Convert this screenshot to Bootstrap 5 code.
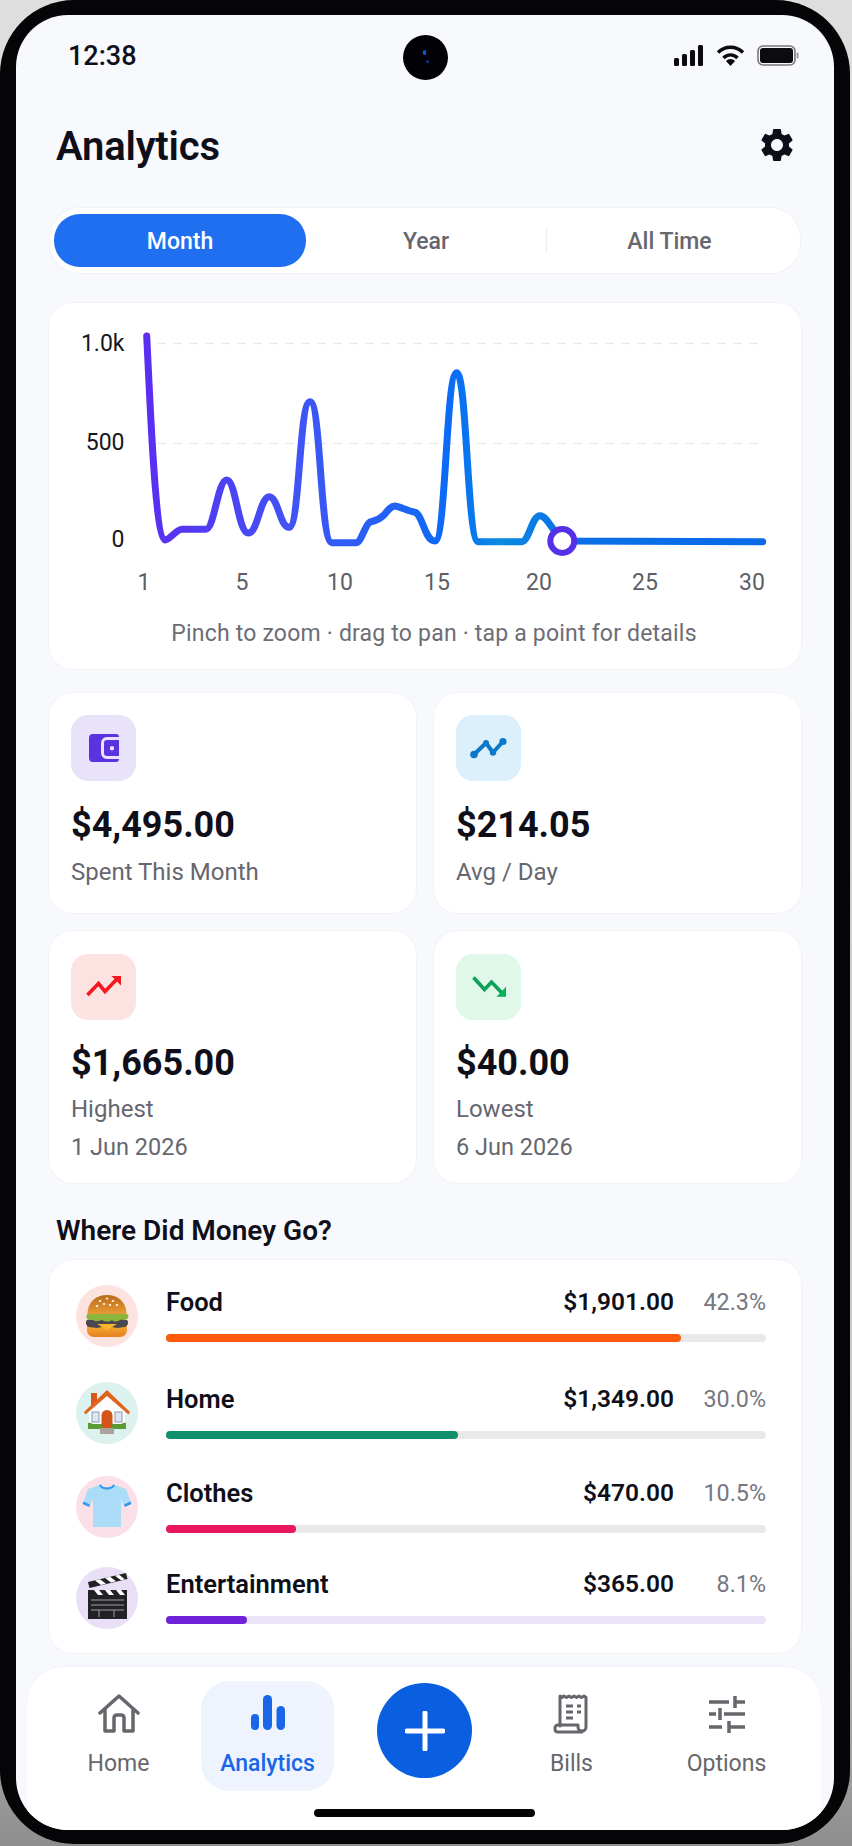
<!DOCTYPE html>
<html lang="en">
<head>
    <meta charset="UTF-8">
    <meta name="viewport" content="width=device-width, initial-scale=1.0">
    <title>Analytics</title>
    <link rel="stylesheet" href="https://cdn.jsdelivr.net/npm/bootstrap@5.3.0/dist/css/bootstrap.min.css">
    <style>
        html, body { margin: 0; height: 1846px; background: linear-gradient(#dedede, #c8c8c8 85%, #8e8e8e); overflow: hidden; }
        body { font-family: Roboto, "Liberation Sans", sans-serif; color: #0f0f1a; }
        .phone { width: 850px; height: 1844px; background: #050507; border-radius: 74px; padding: 15px 16px 14px 16px; }
        .screen { position: relative; height: 100%; background: #f8f9fd; border-radius: 52px; overflow: hidden; }

        .status-row { height: 80px; padding: 0 35px 0 52px; }
        .clock { font-size: 27px; font-weight: 500; margin-top: 2px; }
        .camera { position: absolute; left: 387px; top: 20px; width: 45px; height: 45px; border-radius: 50%; background: #020206; }
        .camera i { position: absolute; left: 20px; top: 15px; width: 3px; height: 5px; border-radius: 2px; background: #0a5fd0; }
        .camera b { position: absolute; left: 23px; top: 25px; width: 3px; height: 3px; border-radius: 2px; background: #0a2f90; }

        .head-row { height: 100px; padding: 0 37px 0 40px; }
        .head-row h1 { font-size: 40px; font-weight: 600; margin: 4px 0 0; letter-spacing: -.2px; }

        .content { padding: 0 33px; }
        .panel { background: #fff; border-radius: 24px; box-shadow: 0 0 0 1px #f2f3f8; }

        .segment { height: 65px; margin: 13px 1px 0; padding: 6px 4px; border-radius: 30px; background: #fff; box-shadow: 0 0 0 1px #f1f2f6; }
        .seg-item { flex: 1 1 0; font-size: 23px; font-weight: 500; color: #66666e; height: 100%; position: relative; padding-top: 3px; }
        .seg-active { flex: 0 0 252px; background: #1f6ff0; color: #fff; border-radius: 26px; }
        .seg-last { padding-right: 3px; }
        .seg-last::before { content: ""; position: absolute; left: 0; top: 14px; bottom: 14px; width: 1px; background: #eeeef2; }
        .seg-mid { flex: 0 0 240px; }

        .chart-panel { height: 366px; margin-top: 30px; }
        .chart-panel svg { display: block; }
        .chart-panel text { font-family: Roboto, sans-serif; font-size: 23px; }
        .chart-note { font-size: 23px; color: #6d6d75; padding-left: 18px; margin-top: 11px; line-height: 30px; letter-spacing: .2px; }

        .stat-grid { display: grid; grid-template-columns: 367px 367px; gap: 18px; margin-top: 24px; }
        .stat-box { padding: 22px; }
        .stat-short { height: 220px; }
        .stat-tall { height: 252px; padding-top: 23px; }
        .stat-tile { width: 65px; height: 66px; border-radius: 17px; }
        .stat-value { font-size: 36px; font-weight: 700; line-height: 42px; margin-top: 22px; }
        .stat-label { font-size: 24px; color: #66666e; line-height: 30px; margin-top: 10px; }
        .stat-date { font-size: 23.5px; margin-top: 8px; }
        .stat-short .stat-value { margin-top: 23px; }
        .stat-short .stat-label { margin-top: 11px; }
        .tile-violet { background: #e8e3fb; }
        .tile-sky { background: #dcf0fb; }
        .tile-rose { background: #fde2e2; }
        .tile-mint { background: #e0f8e9; }

        .section-title { font-size: 28px; font-weight: 600; line-height: 30px; margin: 33px 0 14px 7px; }

        .cat-panel { height: 393px; padding: 25px 35px 25px 27px; }
        .cat-row { height: 62px; }
        .cat-row:nth-child(2) { margin-top: 35px; }
        .cat-row:nth-child(3) { margin-top: 32px; }
        .cat-row:nth-child(4) { margin-top: 29px; }
        .cat-icon { flex: 0 0 62px; width: 62px; height: 62px; margin-right: 28px; border-radius: 50%; }
        .cat-name { font-size: 25.5px; font-weight: 600; line-height: 34px; }
        .cat-amount { font-size: 24.5px; font-weight: 600; line-height: 34px; }
        .cat-pct { width: 92px; text-align: right; font-size: 23.3px; color: #77777f; line-height: 34px; }
        .cat-track { height: 8px; margin-top: 15px; border-radius: 4px; background: #e9e9ec; }
        .cat-fill { height: 100%; border-radius: 4px; }
        .track-violet { background: #ebe3f8; }

        .tabbar { position: absolute; left: 11px; right: 13px; bottom: 0; height: 163px; background: #fff; border-radius: 36px 36px 0 0; box-shadow: 0 -1px 3px rgba(30, 40, 80, .03); padding: 14px 0 0 25px; }
        .tab-item { width: 133px; height: 110px; font-size: 23px; color: #66666c; border-radius: 28px; padding-top: 13px; }
        .tab-item svg { display: block; height: 40px; margin-bottom: 16px; }
        .tab-item span { line-height: 28px; }
        .tab-on { background: #eef3fd; color: #1a66e8; font-weight: 500; margin-left: 16px; }
        .tab-add { width: 95px; height: 95px; border-radius: 50%; background: #0a5fe0; margin: 2px 33px 0 43px; }
        .tab-last { margin-left: 22px; }
        .home-bar { position: absolute; left: 298px; bottom: 13px; width: 221px; height: 8px; border-radius: 4px; background: #050507; }
    </style>
</head>
<body>

<div class="phone">
<div class="screen">

    <div class="status-row d-flex align-items-center justify-content-between">
        <span class="clock">12:38</span>
        <div class="d-flex align-items-center gap-2">
            <svg width="30" height="21" viewBox="0 0 30 21"><g fill="#0b0b10"><rect x="0" y="13" width="5" height="8" rx="1.5"/><rect x="8" y="9" width="5" height="12" rx="1.5"/><rect x="16" y="5" width="5" height="16" rx="1.5"/><rect x="24" y="0" width="5" height="21" rx="1.5"/></g></svg>
            <svg class="ms-1" width="29" height="21" viewBox="0 0 29 21"><g fill="none" stroke="#0b0b10" stroke-width="3.4"><path d="M2 7.5a17.5 17.5 0 0 1 25 0"/><path d="M7.5 13a9.5 9.5 0 0 1 14 0"/></g><path d="M14.5 21l-4.6-5a6.4 6.4 0 0 1 9.2 0z" fill="#0b0b10"/></svg>
            <svg class="ms-1" width="42" height="21" viewBox="0 0 42 21"><rect x="1" y="1" width="37" height="19" rx="5" fill="none" stroke="#77777c" stroke-width="1.6"/><rect x="3" y="3" width="33" height="15" rx="3" fill="#0b0b10"/><rect x="39.6" y="7.5" width="2" height="6" rx="1" fill="#9a9a9f"/></svg>
        </div>
    </div>
    <div class="camera"><i></i><b></b></div>

    <div class="head-row d-flex align-items-center justify-content-between">
        <h1>Analytics</h1>
        <svg width="40" height="40" viewBox="0 0 24 24"><path fill="#0e0e18" d="M19.14 12.94c.04-.3.06-.61.06-.94 0-.32-.02-.64-.07-.94l2.03-1.58a.49.49 0 0 0 .12-.61l-1.92-3.32a.488.488 0 0 0-.59-.22l-2.39.96c-.5-.38-1.03-.7-1.62-.94l-.36-2.54a.484.484 0 0 0-.48-.41h-3.84c-.24 0-.43.17-.47.41l-.36 2.54c-.59.24-1.13.57-1.62.94l-2.39-.96c-.22-.08-.47 0-.59.22L2.74 8.87c-.12.21-.08.47.12.61l2.03 1.58c-.05.3-.09.63-.09.94s.02.64.07.94l-2.03 1.58a.49.49 0 0 0-.12.61l1.92 3.32c.12.22.37.29.59.22l2.39-.96c.5.38 1.03.7 1.62.94l.36 2.54c.05.24.24.41.48.41h3.84c.24 0 .44-.17.47-.41l.36-2.54c.59-.24 1.13-.56 1.62-.94l2.39.96c.22.08.47 0 .59-.22l1.92-3.32c.12-.22.07-.47-.12-.61l-2.01-1.58zM12 15.6c-1.98 0-3.6-1.62-3.6-3.6s1.62-3.6 3.6-3.6 3.6 1.62 3.6 3.6-1.62 3.6-3.6 3.6z"/></svg>
    </div>

    <div class="content">
        <div class="segment d-flex align-items-center">
            <div class="seg-item seg-active d-flex align-items-center justify-content-center">Month</div>
            <div class="seg-item seg-mid d-flex align-items-center justify-content-center">Year</div>
            <div class="seg-item seg-last d-flex align-items-center justify-content-center">All Time</div>
        </div>

        <div class="panel chart-panel">
            <!-- viewBox is in page coordinates so the points are easy to read off -->
            <svg width="751" height="305" viewBox="49 303 751 305">
                <defs>
                    <linearGradient id="lineGrad" gradientUnits="userSpaceOnUse" x1="146" y1="0" x2="763" y2="0">
                        <stop offset="0" stop-color="#5b2ef2"/>
                        <stop offset=".25" stop-color="#3f55f5"/>
                        <stop offset=".5" stop-color="#0a6cf5"/>
                        <stop offset=".57" stop-color="#0a8be0"/>
                        <stop offset=".68" stop-color="#0a70e8"/>
                        <stop offset="1" stop-color="#0a6ae8"/>
                    </linearGradient>
                </defs>
                <path d="M157 343.5H764M157 443.5H764" stroke="#e9e9ec" stroke-width="1.5" stroke-dasharray="9 7" fill="none"/>
                <path fill="none" stroke="url(#lineGrad)" stroke-width="7" stroke-linecap="round" stroke-linejoin="round"
                    d="M146.7 336C150 400 155 538 165 540C170 540 176 529.3 182 529.3L206 529.3C214 529.3 218 480 226.7 480C236 480 238 533 248.3 533C258 533 260 496.7 269.3 496.7C278 496.7 280 527.3 289 527.3C300 527.3 299 401.7 310 401.7C321 401.7 320 542.7 332 542.7L356 542.7C362 542.7 365 521.7 372 521.5C378 520 380 519 384 515C388 510 391 506 395 506C401 507 408 511 414 512C423 513 424 541 435 541C446 541 446 372.7 456.7 372.7C467 372.7 467 541.7 478.3 541.7L521.7 541.7C529 541.7 532 515.7 540 515.7C547 515.7 552 530 562 541L762.7 541.7"/>
                <circle cx="562.3" cy="541" r="12" fill="#fff" stroke="#5530e8" stroke-width="6"/>
                <g fill="#17171c" text-anchor="end" dominant-baseline="central">
                    <text x="124.5" y="343">1.0k</text>
                    <text x="124.5" y="442">500</text>
                    <text x="124.5" y="539">0</text>
                </g>
                <g fill="#5e5e66" text-anchor="middle" dominant-baseline="central">
                    <text x="144" y="582">1</text>
                    <text x="242" y="582">5</text>
                    <text x="340" y="582">10</text>
                    <text x="437" y="582">15</text>
                    <text x="539" y="582">20</text>
                    <text x="645" y="582">25</text>
                    <text x="752" y="582">30</text>
                </g>
            </svg>
            <div class="chart-note text-center">Pinch to zoom · drag to pan · tap a point for details</div>
        </div>

        <div class="stat-grid">
            <div class="panel stat-box stat-short">
                <div class="stat-tile tile-violet"><svg width="65" height="66" viewBox="0 0 65 66"><path d="M22 19h23a3 3 0 0 1 3 3H36a6 6 0 0 0-6 6v10a6 6 0 0 0 6 6h12a3 3 0 0 1-3 3H22a4 4 0 0 1-4-4V23a4 4 0 0 1 4-4z" fill="#5a32e0"/><path fill-rule="evenodd" d="M36 25h12v16H36a3 3 0 0 1-3-3V28a3 3 0 0 1 3-3zm5 6a2.2 2.2 0 1 0 0 4.4 2.2 2.2 0 0 0 0-4.4z" fill="#5a32e0"/></svg></div>
                <div class="stat-value">$4,495.00</div>
                <div class="stat-label">Spent This Month</div>
            </div>
            <div class="panel stat-box stat-short">
                <div class="stat-tile tile-sky"><svg width="65" height="66" viewBox="0 0 65 66"><path d="M18 39.5L30 28l7 9.5L47 26.5" fill="none" stroke="#0b78c9" stroke-width="4" stroke-linecap="round" stroke-linejoin="round"/><g fill="#0b78c9"><circle cx="18" cy="39.5" r="3.8"/><circle cx="30" cy="28" r="3"/><circle cx="37" cy="37.5" r="3.2"/><circle cx="47" cy="26.5" r="3.6"/></g></svg></div>
                <div class="stat-value">$214.05</div>
                <div class="stat-label">Avg / Day</div>
            </div>
            <div class="panel stat-box stat-tall">
                <div class="stat-tile tile-rose"><svg width="65" height="66" viewBox="0 0 65 66"><path d="M16.5 41L27.5 29.5 34 37.5 46 25" fill="none" stroke="#f5191f" stroke-width="3.6"/><path d="M40.5 22h9.5v9.5z" fill="#f5191f"/></svg></div>
                <div class="stat-value">$1,665.00</div>
                <div class="stat-label">Highest</div>
                <div class="stat-label stat-date">1 Jun 2026</div>
            </div>
            <div class="panel stat-box stat-tall">
                <div class="stat-tile tile-mint"><svg width="65" height="66" viewBox="0 0 65 66"><path d="M17.5 23.5L28.5 35.5 35.5 28 46 39" fill="none" stroke="#0e9f58" stroke-width="3.6"/><path d="M50 32.7v10h-9.5z" fill="#02b35c"/></svg></div>
                <div class="stat-value">$40.00</div>
                <div class="stat-label">Lowest</div>
                <div class="stat-label stat-date">6 Jun 2026</div>
            </div>
        </div>

        <div class="section-title">Where Did Money Go?</div>

        <div class="panel cat-panel">
            <div class="cat-row d-flex">
                <div class="cat-icon">
                    <svg width="62" height="62" viewBox="0 0 62 62">
                        <defs>
                            <linearGradient id="bunTop" x1="0" y1="0" x2="0" y2="1"><stop offset="0" stop-color="#b96a1c"/><stop offset="1" stop-color="#e89a35"/></linearGradient>
                            <linearGradient id="bunLow" x1="0" y1="0" x2="0" y2="1"><stop offset="0" stop-color="#f7ad35"/><stop offset="1" stop-color="#e57f1e"/></linearGradient>
                        </defs>
                        <circle cx="31" cy="31" r="31" fill="#fde3e0"/>
                        <path d="M11 40h40v5c0 4-3 7-7 7H18c-4 0-7-3-7-7z" fill="url(#bunLow)"/>
                        <path d="M11 35c6-2 34-2 40 0 2 2 1 6-2 7l-8 1-10-2-10 2-8-1c-3-1-4-5-2-7z" fill="#4b4650"/>
                        <path d="M21 39h20l-10 6z" fill="#f6b72b"/>
                        <path d="M11 29h40c2 1 2 4 0 5-3 2-5 0-7 1-3 2-6 2-8 0-3 2-7 2-10 0-3 1-6 2-9 0-4 0-8 0-6-6z" fill="#8cb53a"/>
                        <path d="M11.5 29C11.5 17 20 10 31 10s19.5 7 19.5 19z" fill="url(#bunTop)"/>
                        <g fill="#fff3dc"><ellipse cx="24" cy="16" rx="1.3" ry=".9"/><ellipse cx="31" cy="13.5" rx="1.3" ry=".9"/><ellipse cx="37" cy="16" rx="1.3" ry=".9"/><ellipse cx="28" cy="19" rx="1.3" ry=".9"/><ellipse cx="34" cy="20" rx="1.3" ry=".9"/><ellipse cx="41" cy="20" rx="1.3" ry=".9"/><ellipse cx="21" cy="21" rx="1.3" ry=".9"/></g>
                    </svg>
                </div>
                <div class="flex-grow-1">
                    <div class="d-flex">
                        <span class="cat-name me-auto">Food</span>
                        <span class="cat-amount">$1,901.00</span>
                        <span class="cat-pct">42.3%</span>
                    </div>
                    <div class="cat-track"><div class="cat-fill" style="width: 85.8%; background: #ff5a0a"></div></div>
                </div>
            </div>
            <div class="cat-row d-flex">
                <div class="cat-icon">
                    <svg width="62" height="62" viewBox="0 0 62 62">
                        <circle cx="31" cy="31" r="31" fill="#dcf2ee"/>
                        <rect x="15" y="11" width="6" height="14" fill="#d9591b"/>
                        <path d="M13 28L31 12l18 16v18H13z" fill="#fdfdfd"/>
                        <path d="M8 30L31 8l23 22-1.5 2.500L31 14 9.500 32.500z" fill="#e2651c"/>
                        <path d="M12 41c3-1 4 1 5 1h28c1 0 2-2 5-1v6H12z" fill="#5c9a33"/>
                        <rect x="25.5" y="28" width="11" height="19" rx="5.5" fill="#d2541a"/>
                        <rect x="16" y="30" width="7" height="10" fill="#dfe6f2" stroke="#8d9ab3"/>
                        <rect x="39" y="30" width="7" height="10" fill="#dfe6f2" stroke="#8d9ab3"/>
                        <rect x="24" y="46" width="14" height="6" fill="#a8a39c"/>
                    </svg>
                </div>
                <div class="flex-grow-1">
                    <div class="d-flex">
                        <span class="cat-name me-auto">Home</span>
                        <span class="cat-amount">$1,349.00</span>
                        <span class="cat-pct">30.0%</span>
                    </div>
                    <div class="cat-track"><div class="cat-fill" style="width: 48.7%; background: #0f8f6c"></div></div>
                </div>
            </div>
            <div class="cat-row d-flex">
                <div class="cat-icon">
                    <svg width="62" height="62" viewBox="0 0 62 62">
                        <circle cx="31" cy="31" r="31" fill="#fbe0ea"/>
                        <path d="M23 9l-11 4-5 14 7 3 3-7v28h28V23l3 7 7-3-5-14-11-4c-2 3-14 3-16 0z" fill="#aadcf8"/>
                        <path d="M23 9c2 6 14 6 16 0l-2-.5c-1 4-11 4-12 0z" fill="#2f9bea"/>
                        <path d="M7.5 25.5l6.5 3-1 2.5-6.5-3zM54.500 25.500l-6.500 3 1 2.500 6.500-3z" fill="#2f9bea"/>
                    </svg>
                </div>
                <div class="flex-grow-1">
                    <div class="d-flex">
                        <span class="cat-name me-auto">Clothes</span>
                        <span class="cat-amount">$470.00</span>
                        <span class="cat-pct">10.5%</span>
                    </div>
                    <div class="cat-track"><div class="cat-fill" style="width: 21.7%; background: #e8185f"></div></div>
                </div>
            </div>
            <div class="cat-row d-flex">
                <div class="cat-icon">
                    <svg width="62" height="62" viewBox="0 0 62 62">
                        <circle cx="31" cy="31" r="31" fill="#e9dff7"/>
                        <rect x="12" y="23" width="39" height="29" fill="#222226"/>
                        <path d="M12 15l38-9 1.5 6-38 9z" fill="#222226"/>
                        <path d="M19 13.5l6 4.5 5-1.200-6-4.500zM29 11l6 4.500 5-1.200-6-4.500zM39 8.800l6 4.500 4-1-6-4.500z" fill="#fff"/>
                        <path d="M18 23l4 5h5l-4-5zM29 23l4 5h5l-4-5zM40 23l4 5h5l-4-5z" fill="#fff"/>
                        <path d="M15 33h33M15 38h33M15 43h33M23 43v7M38 43v7" stroke="#9c9ca2" stroke-width="1"/>
                    </svg>
                </div>
                <div class="flex-grow-1">
                    <div class="d-flex">
                        <span class="cat-name me-auto">Entertainment</span>
                        <span class="cat-amount">$365.00</span>
                        <span class="cat-pct">8.1%</span>
                    </div>
                    <div class="cat-track track-violet"><div class="cat-fill" style="width: 13.5%; background: #6f22d8"></div></div>
                </div>
            </div>
        </div>
    </div>

    <div class="tabbar d-flex align-items-start">
        <div class="tab-item d-flex flex-column align-items-center">
            <svg width="44" height="40" viewBox="0 0 44 40"><path d="M3 19L22 2l19 17M8 15v22h9V24q0-3 3-3h4q3 0 3 3v13h9V15" fill="none" stroke="#66666c" stroke-width="3.5" stroke-linejoin="round" stroke-linecap="round"/></svg>
            <span>Home</span>
        </div>
        <div class="tab-item tab-on d-flex flex-column align-items-center">
            <svg width="36" height="40" viewBox="0 0 36 40"><g fill="#1a66e8"><rect x="1" y="20" width="8" height="16" rx="4"/><rect x="13" y="1" width="9" height="35" rx="4.5"/><rect x="26.5" y="12" width="8.5" height="24" rx="4.2"/></g></svg>
            <span>Analytics</span>
        </div>
        <div class="tab-add d-flex align-items-center justify-content-center">
            <svg width="40" height="40" viewBox="0 0 40 40"><path d="M20 2v36M2 20h36" stroke="#fff" stroke-width="5" stroke-linecap="round"/></svg>
        </div>
        <div class="tab-item d-flex flex-column align-items-center">
            <svg width="38" height="40" viewBox="0 0 38 40"><path d="M7 32V2l2 1.5 2-1.5 2.500 1.500L16 2l2.500 1.500L21 2l2.500 1.500L26 2l2.500 1.500L31 2l2 1.500V33a4 4 0 0 1-8 0v-2H5a3 3 0 0 0-3 3v1q0 3 3 3h24" fill="none" stroke="#66666c" stroke-width="3" stroke-linejoin="round" stroke-linecap="round"/><path d="M13 12h7M13 18h7M13 24h7M24 12h4M24 18h4" stroke="#66666c" stroke-width="3"/></svg>
            <span>Bills</span>
        </div>
        <div class="tab-item tab-last d-flex flex-column align-items-center">
            <svg width="38" height="40" viewBox="0 0 38 40"><path d="M1 8h20M28 8h9M27 2v12M1 20h7M16 20h21M12 14v12M1 33h13M21 33h16M21 27v12" fill="none" stroke="#66666c" stroke-width="3.5"/></svg>
            <span>Options</span>
        </div>
    </div>
    <div class="home-bar"></div>

</div>
</div>

</body>
</html>
